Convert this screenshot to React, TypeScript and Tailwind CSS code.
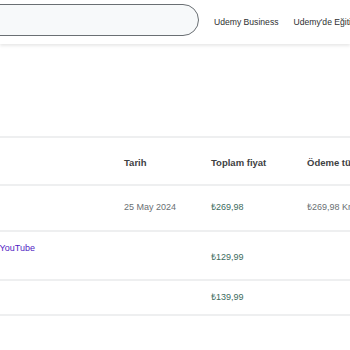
const rows = [
  { title: "", date: "25 May 2024", total: "₺269,98", pay: "₺269,98 Kredi kartı", h: "h-[46px]", align: "items-center" },
  { title: "Sıfırdan İleri Seviye Video Yapımı ve YouTube", date: "", total: "₺129,99", pay: "", h: "h-[49px]", align: "" },
  { title: "", date: "", total: "₺139,99", pay: "", h: "h-[35px]", align: "items-center" },
];

export default function App() {
  return (
    <div className="h-[350px] w-[350px] overflow-hidden bg-white font-['Liberation_Sans',Arial,sans-serif]">
      <header className="relative z-10 flex h-[44px] items-center bg-white shadow-[0_2px_3px_rgba(0,0,0,0.09)]">
        <div className="-ml-[201px] mt-[-4px] h-[32px] w-[400px] shrink-0 rounded-full border border-[#6a6f73] bg-[#f7f9fa]" />
        <nav className="ml-[15px] flex shrink-0 gap-[15px] whitespace-nowrap text-[8.6px] text-[#2d2f31]">
          <span>Udemy Business</span>
          <span>Udemy&apos;de Eğitim Verin</span>
        </nav>
      </header>

      <div className="mt-[92px] border-t-2 border-[#eeeff0]">
        <div className="grid h-[46px] grid-cols-[124px_87px_96px_200px] items-end pb-[14px] text-[9.5px] font-bold text-[#3e4143] whitespace-nowrap">
          <span />
          <span>Tarih</span>
          <span>Toplam fiyat</span>
          <span>Ödeme türü</span>
        </div>
        {rows.map((r, i) => (
          <div
            key={i}
            className={`grid grid-cols-[124px_87px_96px_200px] border-t-2 border-[#eeeff0] text-[9px] whitespace-nowrap ${r.h} ${r.align}`}
          >
            {r.title ? (
              <div className="flex w-[35px] justify-end pt-[10px]">
                <span className="text-[#5022c3]">{r.title}</span>
              </div>
            ) : (
              <span />
            )}
            <span className="text-[#6a6f73]">{r.date}</span>
            <span className={`text-[#3c6b60] ${r.title ? "pt-[19px]" : ""}`}>{r.total}</span>
            <span className="text-[#6a6f73]">{r.pay}</span>
          </div>
        ))}
        <div className="border-t-2 border-[#eeeff0]" />
      </div>
    </div>
  );
}
